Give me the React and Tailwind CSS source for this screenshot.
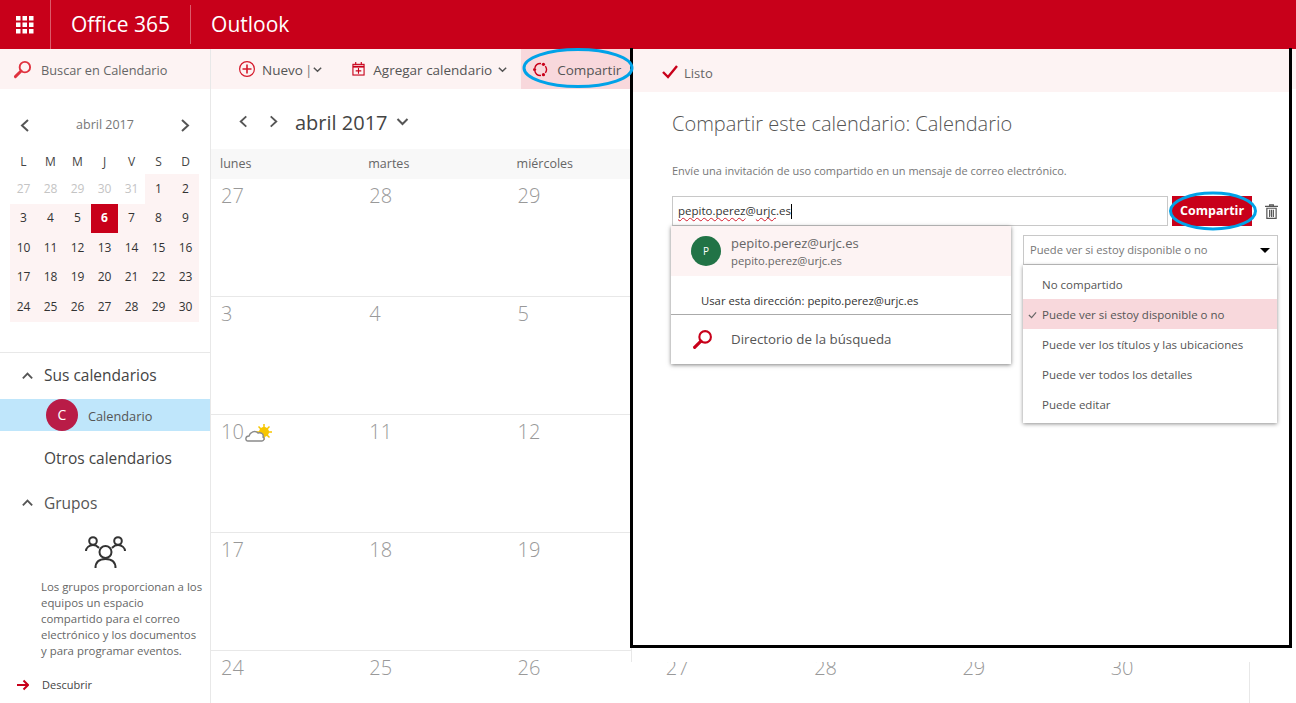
import React from "react";

const font = { fontFamily: '"Open Sans", sans-serif' };

function Search({ className }) {
  return (
    <svg viewBox="0 0 20 20" className={className} fill="none" stroke="currentColor">
      <circle cx="12.5" cy="7.5" r="5.5" strokeWidth="2" />
      <path d="M8.5 11.5 L2.5 17.5" strokeWidth="3" strokeLinecap="round" />
    </svg>
  );
}

function Chevron({ dir = "down", className }) {
  const d = { down: "M2 5l5 5 5-5", up: "M2 10l5-5 5 5", left: "M10 2L4 7.5 10 13", right: "M4 2l6 5.5L4 13" }[dir];
  return (
    <svg viewBox="0 0 14 15" className={className} fill="none" stroke="currentColor" strokeWidth="2">
      <path d={d} />
    </svg>
  );
}

const miniWeeks = [
  [27, 28, 29, 30, 31, 1, 2],
  [3, 4, 5, 6, 7, 8, 9],
  [10, 11, 12, 13, 14, 15, 16],
  [17, 18, 19, 20, 21, 22, 23],
  [24, 25, 26, 27, 28, 29, 30],
];

function MiniCalendar() {
  return (
    <div className="pl-[10px] pr-[11px]">
      <div className="flex items-center justify-between pl-[8px] pr-[7px] pt-[23px] h-[50px] text-[#666]">
        <Chevron dir="left" className="w-[14px] h-[15px] text-[#555]" />
        <span className="text-[12.5px] text-[#777]">abril 2017</span>
        <Chevron dir="right" className="w-[14px] h-[15px] text-[#555]" />
      </div>
      <div className="grid grid-cols-7 w-[189px] h-[35px] items-center pt-[11px] text-[12px] text-[#444]">
        {["L", "M", "M", "J", "V", "S", "D"].map((d, i) => (
          <span key={i} className="text-center">{d}</span>
        ))}
      </div>
      <div className="w-[189px]">
        {miniWeeks.map((week, w) => (
          <div key={w} className="grid grid-cols-7 h-[29.5px]">
            {week.map((d, i) => {
              const out = w === 0 && i < 5;
              const today = w === 1 && i === 3;
              return (
                <span
                  key={i}
                  className={
                    "flex items-center justify-center text-[12px] " +
                    (today
                      ? "bg-[#c8001a] text-white font-bold"
                      : out
                      ? "text-[#c4c4c4]"
                      : "bg-[#fdf3f3] text-[#333]")
                  }
                >
                  {d}
                </span>
              );
            })}
          </div>
        ))}
      </div>
    </div>
  );
}

function Sidebar() {
  return (
    <aside className="w-[211px] shrink-0 border-r border-[#e8e8e8] h-[654px] overflow-hidden">
      <div className="h-[40px] bg-[#fdf3f3] flex items-center pl-[13px] gap-[9px] text-[#666] text-[12.75px]">
        <Search className="w-[19px] h-[19px] text-[#e0323f]" />
        <span className="pt-[3px]">Buscar en Calendario</span>
      </div>
      <MiniCalendar />
      <div className="mt-[30px] border-t border-[#e8e8e8]">
        <div className="flex items-center h-[46px] pl-[21px] gap-[10px] text-[15.5px] text-[#444]">
          <Chevron dir="up" className="w-[13px] h-[14px] text-[#555]" />
          <span>Sus calendarios</span>
        </div>
        <div className="flex items-center h-[32px] bg-[#bfe6fb] pl-[46px] gap-[10px] text-[12.75px] text-[#555]">
          <span className="w-[32px] h-[32px] rounded-full bg-[#b91c47] text-white flex items-center justify-center text-[14px]">C</span>
          <span className="pt-[4px]">Calendario</span>
        </div>
        <div className="h-[54px] pt-[2px] pl-[44px] flex items-center text-[15.5px] text-[#444]">Otros calendarios</div>
        <div className="flex items-center h-[36px] pl-[21px] gap-[10px] text-[15.5px] text-[#555]">
          <Chevron dir="up" className="w-[13px] h-[14px] text-[#555]" />
          <span className="pt-[2px]">Grupos</span>
        </div>
        <div className="flex pt-[15px] pl-[85px]">
          <svg viewBox="0 0 42 32" className="w-[42px] h-[32px] text-[#333]" fill="none" stroke="currentColor" strokeWidth="2">
            <circle cx="8" cy="5" r="3.800" />
            <circle cx="33" cy="5" r="3.800" />
            <circle cx="20.500" cy="16" r="6" />
            <path d="M1 15c0-3 3-6 7-6s5 2 6 3M40 15c0-3-3-6-7-6s-5 2-6 3M10.500 32c0-6 4-9 10-9s10 3 10 9" />
          </svg>
        </div>
        <p className="pl-[41px] pr-[6px] pt-[11px] text-[11.4px] leading-[16px] text-[#666]">
          Los grupos proporcionan a los equipos un espacio compartido para el correo electrónico y los documentos y para programar eventos.
        </p>
        <div className="flex items-center pl-[17px] gap-[13px] pt-[18px] text-[11px] text-[#444]">
          <svg viewBox="0 0 12 12" className="w-[12px] h-[12px] text-[#c8001a]" fill="none" stroke="currentColor" strokeWidth="2">
            <path d="M0 6h11M6.500 1.500L11 6l-4.500 4.500" />
          </svg>
          <span>Descubrir</span>
        </div>
      </div>
    </aside>
  );
}

function Weather() {
  return (
    <svg viewBox="0 0 28 20" className="w-[28px] h-[20px]">
      <g stroke="#f7c600" strokeWidth="1.500">
        <path d="M19 1v16M11 9h16M13.500 3.500l11 11M24.500 3.500l-11 11" />
      </g>
      <circle cx="19" cy="9" r="5" fill="#f7c600" />
      <path d="M3 18c-3 0-3-5 1-5 1-4 6-6 9-3 3-1 6 1 5 4 2 1 1 4-1 4z" fill="#fff" stroke="#8a8a8a" strokeWidth="1.400" />
    </svg>
  );
}

const rows = [
  [27, 28, 29],
  [3, 4, 5],
  [10, 11, 12],
  [17, 18, 19],
  [24, 25, 26, 27, 28, 29, 30],
];

function Main() {
  return (
    <main className="flex-1 min-w-0">
      <div className="h-[40px] bg-[#fdf3f3] flex items-center text-[13.5px] text-[#555]">
        <div className="flex items-center pl-[28px] gap-[7px]">
          <svg viewBox="0 0 16 16" className="w-[16px] h-[16px] text-[#d5192b]" fill="none" stroke="currentColor" strokeWidth="1.200">
            <circle cx="8" cy="8" r="7.400" />
            <path d="M8 3.500v9M3.500 8h9" strokeWidth="1.600" />
          </svg>
          <span className="pt-[3px]">Nuevo</span>
          <span className="text-[#777] -ml-[5px] pt-[3px]">|</span>
          <Chevron className="w-[11px] h-[11px] -ml-[7px] text-[#555]" />
        </div>
        <div className="flex items-center pl-[29px] gap-[8px]">
          <svg viewBox="0 0 14 15" className="w-[13px] h-[14px] text-[#c8001a]" fill="none" stroke="currentColor" strokeWidth="1.200">
            <rect x="1" y="2.500" width="12" height="11.500" />
            <path d="M1 5h12" strokeWidth="2" />
            <path d="M4 0v3M10 0v3M7 6.500v6M4 9.500h6" />
          </svg>
          <span className="pt-[3px]">Agregar calendario</span>
          <Chevron className="w-[11px] h-[11px] -ml-[3px] text-[#555]" />
        </div>
        <div className="ml-[13px] h-full w-[110px] shrink-0 bg-[#f8d8dc] flex items-center pl-[12px] gap-[9px]">
          <svg viewBox="0 0 14 14" className="w-[15px] h-[15px] text-[#c8001a]" fill="none" stroke="currentColor" strokeWidth="1.300">
            <path d="M7.500 1.500A5.500 5.500 0 0 0 1.700 5.600M1.700 8.400A5.500 5.500 0 0 0 7.500 12.500M11.500 10.200A5.500 5.500 0 0 0 11.500 3.800" />
            <circle cx="9.750" cy="2.200" r="1.500" fill="currentColor" stroke="none" />
            <circle cx="1.500" cy="7" r="1.500" fill="currentColor" stroke="none" />
            <circle cx="9.750" cy="11.800" r="1.500" fill="currentColor" stroke="none" />
          </svg>
          <span className="pt-[3px]">Compartir</span>
        </div>
      </div>
      <div className="h-[60px] flex items-center pl-[26px] pt-[5px] text-[#444]">
        <Chevron dir="left" className="w-[13px] h-[15px] text-[#555]" />
        <Chevron dir="right" className="w-[13px] h-[15px] ml-[17px] text-[#555]" />
        <span className="ml-[15px] mt-[3px] text-[20px] text-[#444]">abril 2017</span>
        <Chevron className="w-[15px] h-[15px] ml-[7px] text-[#555]" />
      </div>
      <div className="w-[1039px] border-r border-[#e8e8e8]">
        <div className="grid grid-cols-7 w-[1038px] h-[30px] bg-[#f8f8f8] items-center text-[12.5px] text-[#666]">
          {["lunes", "martes", "miércoles"].map((d) => (
            <span key={d} className="pl-[9px]">{d}</span>
          ))}
        </div>
        {rows.map((r, i) => (
          <div key={i} className={"grid grid-cols-7 w-[1038px] " + (i > 0 ? "h-[118px] border-t border-[#e8e8e8]" : "h-[117px]")}>
            {r.map((d, j) => (
              <div key={j} className="pl-[10px] pt-[2px] flex items-start gap-[1px] text-[20px] font-light text-[#999]">
                <span>{d}</span>
                {i === 2 && j === 0 && <span className="pt-[6px]"><Weather /></span>}
              </div>
            ))}
          </div>
        ))}
      </div>
    </main>
  );
}

function SharePanel() {
  return (
    <div className="absolute left-[631px] top-[48px] w-[661px] h-[614px] bg-white border-l border-[#e8e8e8]">
      <div className="-ml-[2px] w-[662px] h-[600px] border-[3px] border-t-0 border-black bg-white relative">
        <div className="h-[44px] border-t border-[#c8001a] bg-[#fdf3f3] flex items-center pl-[29px] gap-[6px] text-[13px] text-[#666]">
          <svg viewBox="0 0 16 14" className="w-[16px] h-[14px] mt-[2px] text-[#c8001a]" fill="none" stroke="currentColor" strokeWidth="2.400">
            <path d="M1 7l5 5 9-11" />
          </svg>
          <span className="pt-[7px]">Listo</span>
        </div>
        <div className="pl-[39px] pr-[11px]">
          <h2 className="pt-[18px] text-[20px] leading-[28px] font-light text-[#555]">Compartir este calendario: Calendario</h2>
          <p className="pt-[25px] text-[11px] leading-[16px] text-[#777]">Envíe una invitación de uso compartido en un mensaje de correo electrónico.</p>
          <div className="flex items-center mt-[17px] h-[30px]">
            <div className="w-[497px] h-[30px] border border-[#c8c8c8] flex items-center pl-[5px] text-[11.5px] text-[#333]">
              <span className="underline decoration-wavy decoration-[#d5192b] decoration-1 underline-offset-2">pepito.perez</span>
              <span>@</span>
              <span className="underline decoration-wavy decoration-[#d5192b] decoration-1 underline-offset-2">urjc</span>
              <span>.es</span>
              <span className="w-px h-[15px] bg-black" />
            </div>
            <div className="ml-[4px] w-[80px] h-[30px] bg-[#c8001a] text-white font-bold text-[12.5px] flex items-center justify-center">Compartir</div>
            <svg viewBox="0 0 14 16" className="ml-[13px] w-[13px] h-[15px] text-[#555]" fill="none" stroke="currentColor" strokeWidth="1.300">
              <path d="M0 2.500h14M5 2.500V.8h4v1.700M2 4.500h10v11H2zM5 6v8M7 6v8M9 6v8" />
            </svg>
          </div>
          <div className="flex justify-end mt-[9px]">
            <div className="w-[255px] h-[30px] border border-[#c8c8c8] flex items-center justify-between pl-[6px] pr-[7px] text-[11.2px] text-[#777]">
              <span className="pt-[1px]">Puede ver si estoy disponible o no</span>
              <span className="w-0 h-0 border-x-[5px] border-x-transparent border-t-[5px] border-t-black" />
            </div>
          </div>
        </div>
        {/* Suggestions popup */}
        <div className="absolute left-[38px] top-[178px] w-[340px] h-[138px] bg-white shadow-[0_1px_4px_rgba(0,0,0,0.5)]">
          <div className="h-[50px] bg-[#fdf3f3] flex items-center pl-[20px] gap-[10px]">
            <span className="w-[30px] h-[30px] rounded-full bg-[#217346] text-white text-[10px] flex items-center justify-center">P</span>
            <div className="text-[#666] pt-[2px]">
              <div className="text-[13px] leading-[18px]">pepito.perez@urjc.es</div>
              <div className="text-[11.3px] leading-[18px]">pepito.perez@urjc.es</div>
            </div>
          </div>
          <div className="h-[39px] pl-[30px] pt-[15px] text-[11.3px] leading-[20px] text-[#333] border-b border-[#aaa]">
            Usar esta dirección: pepito.perez@urjc.es
          </div>
          <div className="h-[49px] flex items-center pl-[21px] gap-[18px] text-[13.3px] text-[#555]">
            <Search className="w-[21px] h-[21px] text-[#c8001a]" />
            <span>Directorio de la búsqueda</span>
          </div>
        </div>
        {/* Permission menu */}
        <div className="absolute left-[390px] top-[217px] w-[254px] h-[158px] py-[4px] bg-white shadow-[0_1px_4px_rgba(0,0,0,0.45)] text-[11.5px] text-[#555]">
          {["No compartido", "Puede ver si estoy disponible o no", "Puede ver los títulos y las ubicaciones", "Puede ver todos los detalles", "Puede editar"].map((t, i) => (
            <div key={t} className={"h-[30px] flex items-center pl-[19px] pt-[2px] relative " + (i === 1 ? "bg-[#f8d8dc]" : "")}>
              {i === 1 && (
                <svg viewBox="0 0 10 8" className="absolute left-[5px] top-[12px] w-[9px] h-[8px] text-[#666]" fill="none" stroke="currentColor" strokeWidth="1.300">
                  <path d="M1 4l3 3 5-6" />
                </svg>
              )}
              {t}
            </div>
          ))}
        </div>
      </div>
    </div>
  );
}

function Annotations() {
  return (
    <>
      <svg className="absolute left-[521px] top-[47px] w-[114px] h-[42px] text-[#00a2e8]" viewBox="0 0 114 42" fill="none" stroke="currentColor" strokeWidth="3">
        <ellipse cx="57" cy="21" rx="54" ry="18.500" />
      </svg>
      <svg className="absolute left-[1169px] top-[190px] w-[88px] h-[42px] text-[#00a2e8]" viewBox="0 0 88 42" fill="none" stroke="currentColor" strokeWidth="3">
        <ellipse cx="44" cy="21" rx="42.500" ry="18" />
      </svg>
    </>
  );
}

export default function App() {
  return (
    <div style={font} className="relative w-[1296px] h-[703px] overflow-hidden bg-white">
      <header className="h-[49px] bg-[#c8001a] flex items-center text-white">
        <div className="w-[51px] h-full flex items-center justify-center border-r border-[#dc5a6a]">
          <svg viewBox="0 0 18 18" className="w-[18px] h-[18px]" fill="white">
            {[0, 6.5, 13].flatMap((x) =>
              [0, 6.5, 13].map((y) => <rect key={x + "-" + y} x={x} y={y} width="4.500" height="4.500" />)
            )}
          </svg>
        </div>
        <span className="pl-[20px] pr-[20px] text-[21px] leading-[39px] h-[39px] -mt-[1px] border-r border-[#dc5a6a]">Office 365</span>
        <span className="pl-[20px] text-[21px]">Outlook</span>
      </header>
      <div className="flex">
        <Sidebar />
        <Main />
      </div>
      <SharePanel />
      <Annotations />
    </div>
  );
}
